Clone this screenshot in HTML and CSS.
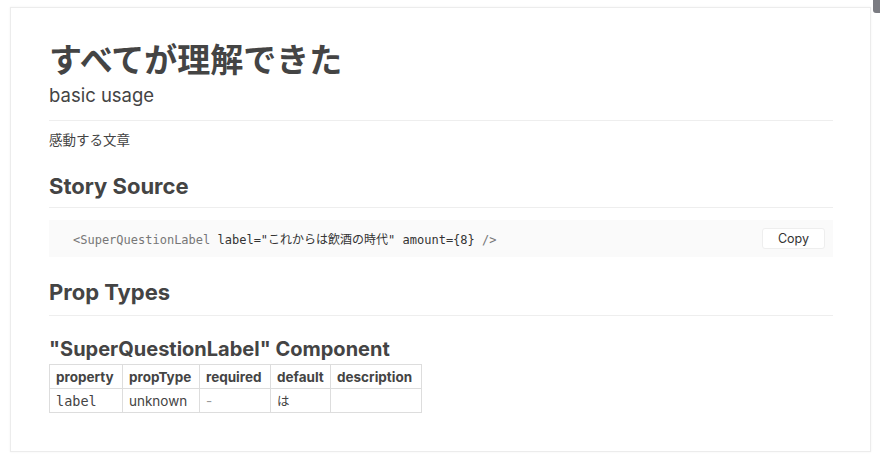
FILE: index.html
```html
<!DOCTYPE html>
<html lang="ja">
<head>
<meta charset="utf-8">
<link rel="stylesheet" href="styles.css">
</head>
<body>
<div class="toggle"></div>
<div class="card">
  <h1 class="title">すべてが理解できた</h1>
  <h2 class="subtitle">basic usage</h2>
  <p class="desc">感動する文章</p>
  <h3 class="section">Story Source</h3>
  <div class="code">
    <code><span class="tag">&lt;SuperQuestionLabel</span> label="これからは飲酒の時代" amount={8} <span class="tag">/&gt;</span></code>
    <button class="copy">Copy</button>
  </div>
  <h3 class="section section-props">Prop Types</h3>
  <h4 class="comp">"SuperQuestionLabel" Component</h4>
  <table class="props">
    <thead>
      <tr><th>property</th><th>propType</th><th>required</th><th>default</th><th>description</th></tr>
    </thead>
    <tbody>
      <tr><td class="mono">label</td><td>unknown</td><td class="dash">-</td><td class="cjk">は</td><td></td></tr>
    </tbody>
  </table>
</div>
</body>
</html>
```
FILE: styles.css
```css
html, body {
  margin: 0;
  padding: 0;
  background: #fff;
}
body {
  font-family: Inter, "Noto Sans CJK JP", sans-serif;
  color: #444;
  padding: 7px 9px 9px 10px;
}
.toggle {
  position: absolute;
  top: 0;
  right: 0;
  width: 7px;
  height: 13px;
  background: #7b7c82;
  border-radius: 0 0 0 3px;
}
.card {
  border: 1px solid #ececec;
  box-shadow: 0 0 2px rgba(0,0,0,0.06);
  background: #fff;
  box-sizing: border-box;
  height: 445px;
  padding: 29px 37px 0 38px;
}
.title {
  font-family: "Noto Sans CJK JP", sans-serif;
  font-size: 33px;
  font-weight: 700;
  line-height: 42px;
  margin: 0;
  color: #444;
}
.subtitle {
  font-size: 18.5px;
  font-weight: 400;
  line-height: 24px;
  margin: 4px 0 0;
  padding-bottom: 13px;
  border-bottom: 1px solid #eee;
  color: #444;
}
.desc {
  font-family: "Noto Sans CJK JP", sans-serif;
  font-size: 13.5px;
  line-height: 20px;
  margin: 8px 0 0;
  color: #444;
}
.section {
  font-size: 22px;
  font-weight: 700;
  line-height: 28px;
  margin: 23px 0 0;
  padding-bottom: 7px;
  border-bottom: 1px solid #eee;
  color: #444;
}
.code {
  margin-top: 12px;
  background: #fafafa;
  height: 37px;
  display: flex;
  align-items: center;
  justify-content: space-between;
  padding: 0 8px 0 24px;
}
.code code {
  font-family: "DejaVu Sans Mono", "Noto Sans CJK JP", monospace;
  font-size: 12px;
  color: #333;
}
.code .tag {
  color: #777;
}
.copy {
  font-family: Inter, sans-serif;
  font-size: 12.5px;
  color: #333;
  background: #fff;
  border: 1px solid #eee;
  border-radius: 3px;
  width: 63px;
  height: 21px;
  padding: 0;
}
.section-props {
  margin-top: 21px;
  padding-bottom: 9px;
}
.comp {
  font-size: 20px;
  font-weight: 700;
  line-height: 24px;
  margin: 21px 0 0;
  color: #444;
}
.props {
  border-collapse: collapse;
  margin-top: 3px;
  font-size: 13.5px;
}
.props th, .props td {
  border: 1px solid #ddd;
  height: 23px;
  padding: 0 6px;
  text-align: left;
  color: #444;
}
.props th {
  font-weight: 700;
}
.props th:nth-child(1), .props td:nth-child(1) { width: 60px; }
.props th:nth-child(2), .props td:nth-child(2) { width: 64px; }
.props th:nth-child(3), .props td:nth-child(3) { width: 58px; }
.props th:nth-child(4), .props td:nth-child(4) { width: 47px; }
.props th:nth-child(5), .props td:nth-child(5) { width: 78px; }
.props .mono {
  font-family: "DejaVu Sans Mono", monospace;
  font-size: 13.5px;
}
.props .dash {
  color: #999;
}
.props .cjk {
  font-family: "Noto Sans CJK JP", sans-serif;
  font-size: 12.5px;
}
```
